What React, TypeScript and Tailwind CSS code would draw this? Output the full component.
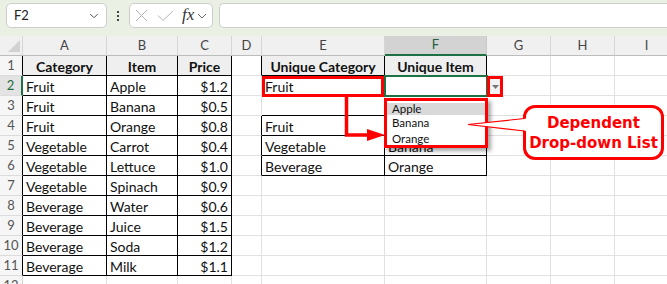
import React from 'react';
import { ChevronDown } from 'lucide-react';

const colWidths = [84, 71, 54, 30, 123, 102, 64, 64, 64];
const colLetters = ['A', 'B', 'C', 'D', 'E', 'F', 'G', 'H', 'I'];

type Cell = { t: string; bold?: boolean; align?: 'l' | 'c' | 'r'; fill?: boolean };

const main: [string, string, string][] = [
  ['Fruit', 'Apple', '$1.2'],
  ['Fruit', 'Banana', '$0.5'],
  ['Fruit', 'Orange', '$0.8'],
  ['Vegetable', 'Carrot', '$0.4'],
  ['Vegetable', 'Lettuce', '$1.0'],
  ['Vegetable', 'Spinach', '$0.9'],
  ['Beverage', 'Water', '$0.6'],
  ['Beverage', 'Juice', '$1.5'],
  ['Beverage', 'Soda', '$1.2'],
  ['Beverage', 'Milk', '$1.1'],
];

function getCell(r: number, c: number): Cell | null {
  if (r === 1) {
    if (c === 0) return { t: 'Category', bold: true, align: 'c', fill: true };
    if (c === 1) return { t: 'Item', bold: true, align: 'c', fill: true };
    if (c === 2) return { t: 'Price', bold: true, align: 'c', fill: true };
    if (c === 4) return { t: 'Unique Category', bold: true, align: 'c', fill: true };
    if (c === 5) return { t: 'Unique Item', bold: true, align: 'c', fill: true };
    return null;
  }
  if (r >= 2 && r <= 11 && c <= 2) {
    const row = main[r - 2];
    return { t: row[c], align: c === 2 ? 'r' : 'l' };
  }
  if (r === 2 && c === 4) return { t: 'Fruit' };
  const uniq: Record<number, [string, string]> = {
    4: ['Fruit', 'Apple'],
    5: ['Vegetable', 'Banana'],
    6: ['Beverage', 'Orange'],
  };
  if (uniq[r] && (c === 4 || c === 5)) return { t: uniq[r][c - 4] };
  return null;
}

function inTable(r: number, c: number) {
  if (c < 0) return false;
  if (r >= 1 && r <= 11 && c <= 2) return true;
  if (r === 1 && (c === 4 || c === 5)) return true;
  if (r >= 4 && r <= 6 && (c === 4 || c === 5)) return true;
  return false;
}

function FormulaBar() {
  return (
    <div className="h-[36px] bg-[#eaf0e4] flex items-start pt-[3px] pl-[6px]">
      <div className="w-[101px] h-[25px] bg-white border border-[#cdcdcd] rounded-[5px] flex items-center justify-between pl-[7px] pr-[5px]">
        <span className="text-[13px] text-[#222]">F2</span>
        <ChevronDown size={14} strokeWidth={1.6} className="text-[#444]" />
      </div>
      <div className="w-[22px] h-[25px] flex flex-col items-center justify-center gap-[2px]">
        <div className="w-[2px] h-[2px] bg-[#444]" />
        <div className="w-[2px] h-[2px] bg-[#444]" />
        <div className="w-[2px] h-[2px] bg-[#444]" />
      </div>
      <div className="w-[84px] h-[25px] bg-white border border-[#cdcdcd] rounded-[5px] flex items-center pl-[5px]">
        <svg width="13" height="13" viewBox="0 0 13 13" className="mr-[9px]">
          <path d="M1 1 L12 12 M12 1 L1 12" stroke="#b4b4b4" strokeWidth="1" fill="none" />
        </svg>
        <svg width="17" height="12" viewBox="0 0 17 12" className="mr-[8px]">
          <path d="M1 5.5 L6 10.5 L16 1" stroke="#b4b4b4" strokeWidth="1" fill="none" />
        </svg>
        <span className="font-['Liberation_Serif',serif] italic text-[17px] leading-none text-[#333] mr-[3px] -mt-[2px]">fx</span>
        <svg width="10" height="6" viewBox="0 0 10 6">
          <path d="M1 1 L5 5 L9 1" stroke="#666" strokeWidth="1" fill="none" />
        </svg>
      </div>
      <div className="ml-[6px] flex-1 h-[25px] bg-white border border-r-0 border-[#cdcdcd] rounded-l-[5px]" />
    </div>
  );
}

function Grid() {
  const rows = Array.from({ length: 13 }, (_, i) => i + 1);
  return (
    <div className="grid grid-cols-[23px_84px_71px_54px_30px_123px_102px_64px_64px_64px] auto-rows-[20px] w-[679px]">
      {/* header row */}
      <div className="relative bg-[#f0f0f0] border-r border-b border-r-[#d5d5d5] border-b-[#bdbdbd]">
        <svg width="23" height="19" viewBox="0 0 23 19" className="absolute left-0 top-0">
          <polygon points="8,16 20,16 20,4" fill="#d2d2d2" />
        </svg>
      </div>
      {colLetters.map((l, i) =>
        l === 'F' ? (
          <div
            key={l}
            className="bg-[#d3d3d3] border-r border-r-[#c8c8c8] border-b-2 border-b-[#1e7145] flex items-center justify-center text-[13px] text-[#1e5e3a]"
          >
            {l}
          </div>
        ) : (
          <div
            key={l}
            className="bg-[#f0f0f0] border-r border-b border-r-[#d5d5d5] border-b-[#bdbdbd] flex items-center justify-center text-[13px] text-[#444]"
          >
            {l}
          </div>
        )
      )}
      {rows.map((r) => (
        <React.Fragment key={r}>
          {r === 2 ? (
            <div className="bg-[#e3e3e3] border-r-2 border-b border-r-[#1e7145] border-b-[#dcdcdc] flex items-center justify-center text-[13px] text-[#1e6b3e]">
              {r}
            </div>
          ) : r <= 11 ? (
            <div className="bg-[#f6f6f6] border-r border-b border-r-black border-b-[#dcdcdc] flex items-center justify-center text-[13px] text-[#555]">
              {r}
            </div>
          ) : (
            <div className="bg-[#f6f6f6] border-r border-b border-r-[#d5d5d5] border-b-[#dcdcdc] flex items-center justify-center text-[13px] text-[#555]">
              {r}
            </div>
          )}
          {colWidths.map((_, c) => {
            const cell = getCell(r, c);
            const rBlack = inTable(r, c) || inTable(r, c + 1);
            const bBlack = inTable(r, c) || inTable(r + 1, c);
            const rB = rBlack ? 'border-r-black' : 'border-r-[#e1e1e1]';
            const bB = bBlack ? 'border-b-black' : 'border-b-[#e1e1e1]';
            const align =
              cell?.align === 'c' ? 'justify-center' : cell?.align === 'r' ? 'justify-end' : 'justify-start';
            const fill = cell?.fill ? 'bg-[#efefef]' : 'bg-white';
            const weight = cell?.bold ? 'font-bold' : 'font-normal';
            const sel = r === 2 && c === 5 ? 'relative z-10 outline-2 outline-[#1e7145] -outline-offset-1' : '';
            return (
              <div
                key={c}
                className={`flex items-end overflow-hidden whitespace-nowrap border-r border-b ${rB} ${bB} ${align} ${fill} ${weight} ${sel} px-[3px] leading-[17px] text-[14px] text-[#111]`}
              >
                {cell?.t ?? ''}
              </div>
            );
          })}
        </React.Fragment>
      ))}
    </div>
  );
}

export default function App() {
  return (
    <div className="relative w-[667px] h-[284px] overflow-hidden bg-white font-['Lato','Liberation_Sans',sans-serif]">
      <FormulaBar />
      <Grid />

      {/* red box around E2 */}
      <div className="absolute left-[262px] top-[76px] w-[122px] h-[21px] border-[3px] border-[#ff0000] z-20" />

      {/* dropdown button */}
      <div className="absolute left-[487px] top-[76px] w-[16px] h-[21px] border-[3px] border-[#ff0000] bg-[#f3f3f3] z-20 flex items-center justify-center">
        <svg width="7" height="4" viewBox="0 0 7 4">
          <polygon points="0,0 7,0 3.5,4" fill="#777" />
        </svg>
      </div>

      {/* dropdown list */}
      <div className="absolute left-[384px] top-[98px] w-[104px] h-[50px] border-[3px] border-[#ff0000] bg-white z-20 shadow-[3px_3px_4px_rgba(0,0,0,0.35)] pt-[1.5px] text-[11.5px] text-[#111]">
        <div className="h-[12px] leading-[11px] bg-[#d9d9d9] pl-[5px]">Apple</div>
        <div className="h-[16.5px] leading-[16.5px] pl-[5px]">Banana</div>
        <div className="h-[16.5px] leading-[16.5px] pl-[5px]">Orange</div>
      </div>

      {/* callout */}
      <div className="absolute left-[523px] top-[105px] w-[141px] h-[55px] border-[3px] border-[#ff0000] rounded-[12px] bg-white z-20 flex flex-col items-center justify-center font-['DejaVu_Sans',sans-serif] font-bold text-[15px] leading-[20px] text-[#ff0000]">
        <span>Dependent</span>
        <span>Drop-down List</span>
      </div>

      {/* arrows */}
      <svg width="667" height="284" viewBox="0 0 667 284" className="absolute left-0 top-0 z-30 pointer-events-none">
        <path d="M346.5 96 V135 H370" stroke="#ff0000" strokeWidth="3.5" fill="none" />
        <polygon points="367,129 385,135 367,141" fill="#ff0000" />
        <polygon points="468,124.5 527,118.5 527,131" fill="#ffffff" />
        <path d="M468 124.5 L524.5 118.5 M468 124.5 L524.5 131" stroke="#ff0000" strokeWidth="1.2" fill="none" />
      </svg>
    </div>
  );
}
